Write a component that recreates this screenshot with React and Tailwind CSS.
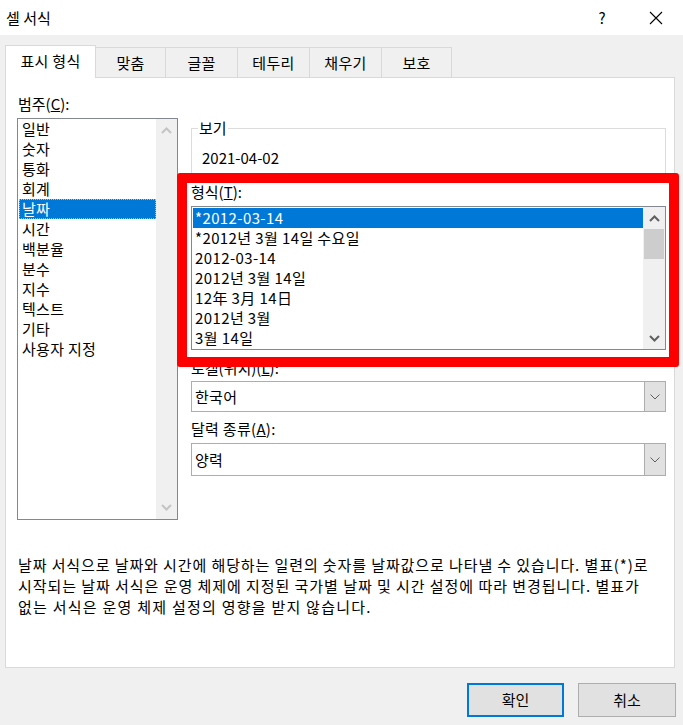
import React from "react";

const FONT = { fontFamily: '"Noto Sans CJK KR", "Noto Sans", sans-serif' };

function UpArrow({ color = "#606060", w = 2 }) {
  return (
    <svg width="11" height="7" viewBox="0 0 11 7">
      <path d="M1 6 L5.5 1.5 L10 6" fill="none" stroke={color} strokeWidth={w} />
    </svg>
  );
}
function DownArrow({ color = "#606060", w = 2 }) {
  return (
    <svg width="11" height="7" viewBox="0 0 11 7">
      <path d="M1 1 L5.5 5.5 L10 1" fill="none" stroke={color} strokeWidth={w} />
    </svg>
  );
}
function ComboChevron() {
  return (
    <svg width="10" height="6" viewBox="0 0 10 6">
      <path d="M0.5 0.5 L5 5 L9.5 0.5" fill="none" stroke="#606060" strokeWidth="1" />
    </svg>
  );
}

const categories = ["일반", "숫자", "통화", "회계", "날짜", "시간", "백분율", "분수", "지수", "텍스트", "기타", "사용자 지정"];
const formats = ["*2012-03-14", "*2012년 3월 14일 수요일", "2012-03-14", "2012년 3월 14일", "12年 3月 14日", "2012년 3월", "3월 14일"];
const tabs = [
  { label: "맞춤", w: "w-[70px]" },
  { label: "글꼴", w: "w-[72px]" },
  { label: "테두리", w: "w-[72px]" },
  { label: "채우기", w: "w-[72px]" },
  { label: "보호", w: "w-[70px]" },
];

function Combo({ value, h }) {
  return (
    <div className={`flex ${h} border border-[#adadad] bg-white`}>
      <div className="flex-1 pl-[3px] flex items-center text-[15px] leading-[20px] tracking-[0.3px]">{value}</div>
      <div className="w-[21px] bg-[#e1e1e1] border-l border-[#adadad] flex items-center justify-center">
        <ComboChevron />
      </div>
    </div>
  );
}

export default function App() {
  return (
    <div className="relative w-[683px] h-[725px] bg-[#f0f0f0] overflow-hidden text-black flex flex-col" style={FONT}>
      {/* Title bar */}
      <div className="h-[35px] bg-white flex items-center shrink-0">
        <div className="pl-[6px] text-[15px] leading-[20px] flex-1">셀 서식</div>
        <div className="w-[20px] text-center text-[15px] leading-[20px] mr-[37px]">?</div>
        <div className="w-[14px] mr-[20px] flex items-center justify-center">
          <svg width="14" height="14" viewBox="0 0 14 14">
            <path d="M1 1 L13 13 M13 1 L1 13" stroke="#000" strokeWidth="1.1" />
          </svg>
        </div>
      </div>

      {/* Tabs */}
      <div className="mt-[10px] ml-[5px] flex items-end h-[32px] shrink-0">
        <div className="relative z-10 -mb-px h-[33px] w-[91px] bg-white border-l border-t border-r border-[#d9d9d9] flex items-center justify-center text-[15px] leading-[20px] pb-[2px] tracking-[0.3px]">
          표시 형식
        </div>
        {tabs.map((t) => (
          <div
            key={t.label}
            className={`h-[30px] ${t.w} bg-[#f0f0f0] border-t border-r border-[#d9d9d9] flex items-center justify-center text-[15px] leading-[20px] tracking-[0.3px]`}
          >
            {t.label}
          </div>
        ))}
      </div>

      {/* Panel */}
      <div className="ml-[5px] w-[670px] h-[591px] shrink-0 bg-white border border-[#d9d9d9] flex flex-col">
        <div className="flex pl-[11px] pt-[16px]">
          {/* Left column */}
          <div className="w-[161px] flex flex-col">
            <div className="h-[20px] leading-[20px] text-[15px] pl-[1px]">
              범주(<span className="underline">C</span>):
            </div>
            <div className="mt-[4px] h-[402px] border border-[#828790] flex">
              <div className="flex-1 flex flex-col">
                {categories.map((c) => (
                  <div key={c} className="h-[20px] flex">
                    {c === "날짜" ? (
                      <div className="ml-[1px] flex-1 bg-[#0078d7] text-white border border-dotted border-[#e8b26a] pl-[2px] leading-[18px] text-[15px] tracking-[0.3px]">
                        {c}
                      </div>
                    ) : (
                      <div className="pl-[4px] leading-[20px] text-[15px] tracking-[0.3px]">{c}</div>
                    )}
                  </div>
                ))}
              </div>
              <div className="w-[21px] bg-[#f0f0f0] flex flex-col items-center justify-between py-[8px]">
                <UpArrow color="#c4c4c4" />
                <DownArrow color="#c4c4c4" />
              </div>
            </div>
          </div>

          {/* Right column */}
          <div className="ml-[13px] w-[475px] pt-[24px] flex flex-col">
            <fieldset className="border border-[#dcdcdc] pl-[10px] pt-[10px] pb-[8px]">
              <legend className="ml-[-4px] px-[1px] h-[20px] leading-[20px] text-[15px]">보기</legend>
              <div className="h-[20px] leading-[20px] text-[15px]">2021-04-02</div>
            </fieldset>

            <div className="mt-[5px] h-[20px] leading-[20px] text-[15px]">
              형식(<span className="underline">T</span>):
            </div>
            <div className="mt-[4px] h-[144px] border border-[#828790] flex p-px pr-0">
              <div className="flex-1 flex flex-col">
                {formats.map((f, i) => (
                  <div
                    key={f}
                    className={`h-[20px] leading-[20px] text-[15px] pl-[2px] tracking-[0.4px] ${i === 0 ? "bg-[#0078d7] text-white" : ""}`}
                  >
                    {f}
                  </div>
                ))}
              </div>
              <div className="w-[22px] -my-px bg-[#f0f0f0] flex flex-col items-center">
                <div className="h-[22px] flex items-center justify-center">
                  <UpArrow />
                </div>
                <div className="w-[20px] h-[30px] bg-[#cdcdcd]" />
                <div className="flex-1" />
                <div className="h-[22px] flex items-center justify-center">
                  <DownArrow />
                </div>
              </div>
            </div>

            <div className="mt-[8px] h-[20px] leading-[20px] text-[15px]">
              로캘(위치)(<span className="underline">L</span>):
            </div>
            <div className="mt-[3px]">
              <Combo value="한국어" h="h-[31px]" />
            </div>
            <div className="mt-[7px] h-[20px] leading-[20px] text-[15px] tracking-[0.3px]">
              달력 종류(<span className="underline">A</span>):
            </div>
            <div className="mt-[4px]">
              <Combo value="양력" h="h-[33px]" />
            </div>
          </div>
        </div>

        <div className="mt-[34px] pl-[12px] text-[15px] leading-[21px] whitespace-nowrap">
          <div className="tracking-[0.9px]">
            날짜 서식으로 날짜와 시간에 해당하는 일련의 숫자를 날짜값으로 나타낼 수 있습니다. 별표(*)로
          </div>
          <div className="tracking-[0.95px]">
            시작되는 날짜 서식은 운영 체제에 지정된 국가별 날짜 및 시간 설정에 따라 변경됩니다. 별표가
          </div>
          <div className="tracking-[1.25px]">없는 서식은 운영 체제 설정의 영향을 받지 않습니다.</div>
        </div>
      </div>

      {/* Buttons */}
      <div className="mt-[15px] flex justify-end pr-[7px] gap-[14px]">
        <button className="w-[97px] h-[34px] bg-[#e1e1e1] border-2 border-[#0078d7] text-[15px] leading-[20px]">
          확인
        </button>
        <button className="w-[98px] h-[34px] bg-[#e1e1e1] border border-[#adadad] text-[15px] leading-[20px]">
          취소
        </button>
      </div>

      {/* Red annotation box */}
      <div className="absolute left-[177px] top-[173px] w-[502px] h-[194px] border-[10px] border-[#ff0000] rounded-[3px] pointer-events-none" />
    </div>
  );
}
